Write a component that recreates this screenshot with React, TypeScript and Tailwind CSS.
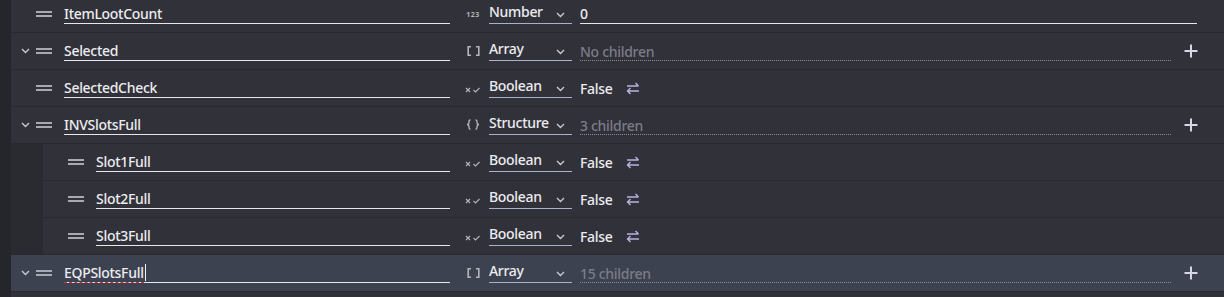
import React from "react";

type Kind = "number" | "array" | "boolean" | "structure";

interface RowDef {
  name: string;
  kind: Kind;
  value?: string;
  expandable?: boolean;
  nested?: boolean;
  active?: boolean;
}

const rows: RowDef[] = [
  { name: "ItemLootCount", kind: "number", value: "0" },
  { name: "Selected", kind: "array", value: "No children", expandable: true },
  { name: "SelectedCheck", kind: "boolean", value: "False" },
  { name: "INVSlotsFull", kind: "structure", value: "3 children", expandable: true },
  { name: "Slot1Full", kind: "boolean", value: "False", nested: true },
  { name: "Slot2Full", kind: "boolean", value: "False", nested: true },
  { name: "Slot3Full", kind: "boolean", value: "False", nested: true },
  { name: "EQPSlotsFull", kind: "array", value: "15 children", expandable: true, active: true },
];

const typeLabel: Record<Kind, string> = {
  number: "Number",
  array: "Array",
  boolean: "Boolean",
  structure: "Structure",
};

function Chevron() {
  return (
    <svg width="9" height="6" viewBox="0 0 9 6" className="block">
      <path d="M1 1 L4.5 4.5 L8 1" fill="none" stroke="#c8c8d2" strokeWidth="1.4" />
    </svg>
  );
}

function Handle() {
  return (
    <div className="flex flex-col gap-[2px] w-[16px]">
      <div className="h-[2px] bg-[#a9a9b2]" />
      <div className="h-[2px] bg-[#a9a9b2]" />
    </div>
  );
}

function TypeIcon({ kind }: { kind: Kind }) {
  if (kind === "number") {
    return (
      <span className="text-[7px] font-bold leading-none tracking-[0.5px] text-[#b4b4bc] mt-[1px]">
        123
      </span>
    );
  }
  if (kind === "array") {
    return (
      <svg width="13" height="10" viewBox="0 0 13 10" className="block">
        <path d="M4 0.8 H1.2 V9.2 H4 M9 0.8 H11.8 V9.2 H9" fill="none" stroke="#b4b4bc" strokeWidth="1.6" />
      </svg>
    );
  }
  if (kind === "structure") {
    return (
      <svg width="14" height="11" viewBox="0 0 14 11" className="block mb-[1px]">
        <path
          d="M4.5 0.8 C3 0.8 3 1.5 3 3 C3 4.5 2.5 5.5 1 5.5 C2.5 5.5 3 6.5 3 8 C3 9.5 3 10.2 4.5 10.2 M9.5 0.8 C11 0.8 11 1.5 11 3 C11 4.5 11.5 5.5 13 5.5 C11.5 5.5 11 6.5 11 8 C11 9.5 11 10.2 9.5 10.2"
          fill="none"
          stroke="#b4b4bc"
          strokeWidth="1.3"
        />
      </svg>
    );
  }
  return (
    <svg width="16" height="6" viewBox="0 0 16 6" className="block mt-[3px]">
      <path d="M1 1 L5 5 M5 1 L1 5" stroke="#b4b4bc" strokeWidth="1.1" />
      <path d="M8.5 3 L10.5 5 L14.5 1" fill="none" stroke="#b4b4bc" strokeWidth="1.1" />
    </svg>
  );
}

function SwapIcon() {
  return (
    <svg width="14" height="13" viewBox="0 0 14 13" className="block">
      <path d="M1 4 H12.5 M9.5 1 L12.5 4" fill="none" stroke="#b7b2e2" strokeWidth="1.4" />
      <path d="M13 9 H1.5 M4.5 6 L1.5 9 L4.5 12" fill="none" stroke="#b7b2e2" strokeWidth="1.4" />
    </svg>
  );
}

function Plus() {
  return (
    <svg width="14" height="14" viewBox="0 0 14 14" className="block">
      <path d="M7 0.5 V13.5 M0.5 7 H13.5" stroke="#d8d6e6" strokeWidth="2" />
    </svg>
  );
}

function Row({ r }: { r: RowDef }) {
  const bg = r.active ? "bg-[#3d4250]" : "bg-[#313139]";
  const valueEl = (() => {
    if (r.kind === "number") {
      return (
        <div className="flex-1 h-[20px] border-b border-[#e6e6ec] text-[#ececf0] leading-[19px] mr-[27px]">
          {r.value}
        </div>
      );
    }
    if (r.kind === "boolean") {
      return (
        <div className="flex-1 flex items-center gap-[13px] text-[#ececf0] pt-[1px]">
          <span className="leading-[19px]">{r.value}</span>
          <SwapIcon />
        </div>
      );
    }
    return (
      <div className="flex-1 flex items-center">
        <div className="flex-1 h-[20px] border-b border-dotted border-[#8c8c98] text-[#7c7c88] leading-[19px] pt-[1px]">
          {r.value}
        </div>
        <div className="ml-[13px] mr-[26px]">
          <Plus />
        </div>
      </div>
    );
  })();

  return (
    <div className={`flex h-[37px] border-b border-[#29292f] ${r.nested ? "pl-[32px] bg-[#2a2a31]" : ""}`}>
      <div className={`flex-1 flex items-center ${bg}`}>
        <div className="w-[25px] pl-[10px] flex items-center">{r.expandable ? <Chevron /> : null}</div>
        <Handle />
        <div className="flex-1 ml-[12px] h-[20px] border-b border-[#e6e6ec] text-[#ececf0] leading-[19px] whitespace-nowrap">
          {r.active ? (
            <span className="relative inline-block">
              <span className="border-b border-dashed border-[#e0303a]">{r.name}</span>
              <span className="absolute right-[-2px] top-[1px] w-px h-[17px] bg-[#f0f0f0]" />
            </span>
          ) : (
            r.name
          )}
        </div>
        <div className="w-[774px] flex items-center">
          <div className="w-[16px] ml-[15px] flex justify-center items-center">
            <TypeIcon kind={r.kind} />
          </div>
          <div className="ml-[8px] w-[83px] h-[20px] border-b border-[#aab0cc] flex items-center justify-between pr-[7px]">
            <span className="text-[#ececf0] leading-[19px] mb-[4px]">{typeLabel[r.kind]}</span>
            <span className="mt-[2px]">
              <Chevron />
            </span>
          </div>
          <div className="ml-[8px] flex-1 flex items-center">{valueEl}</div>
        </div>
      </div>
    </div>
  );
}

export default function App() {
  return (
    <div
      className="w-[1224px] h-[297px] overflow-hidden bg-[#25252c] pl-[11px] text-[14px] font-medium tracking-[-0.3px]"
      style={{ fontFamily: '"Noto Sans", "Open Sans", sans-serif' }}
    >
      <div className="-mt-[4px] flex flex-col">
        {rows.map((r, i) => (
          <Row key={i} r={r} />
        ))}
        <div className="h-[20px] bg-[#313139]" />
      </div>
    </div>
  );
}
